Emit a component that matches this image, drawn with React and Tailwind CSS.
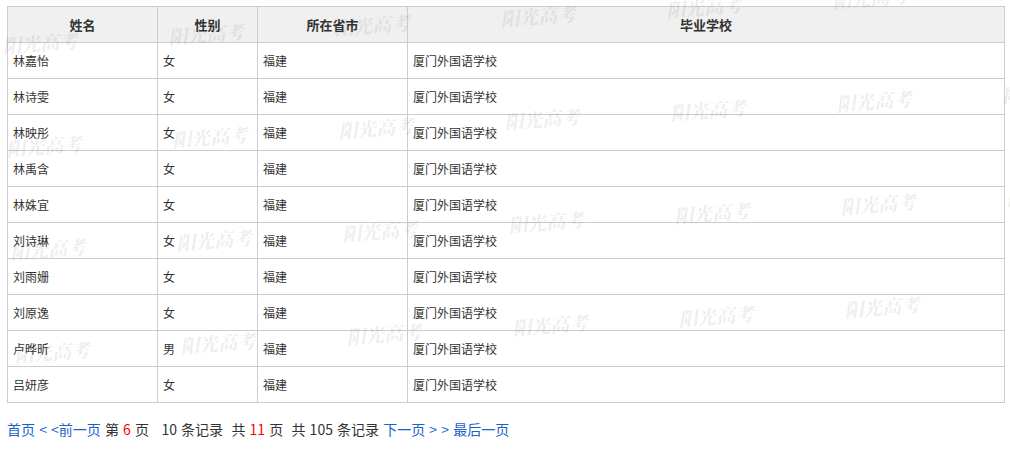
import React from 'react';

const rows = [
  ['林嘉怡', '女'],
  ['林诗雯', '女'],
  ['林映彤', '女'],
  ['林禹含', '女'],
  ['林姝宜', '女'],
  ['刘诗琳', '女'],
  ['刘雨姗', '女'],
  ['刘原逸', '女'],
  ['卢晔昕', '男'],
  ['吕妍彦', '女'],
];

// watermark grid: centers drift up-right, rows step down
const marks = [];
for (let j = 0; j < 4; j++) {
  for (let i = 0; i < 7; i++) {
    marks.push({ x: 42 + 166 * i + 4 * j, y: 42 - 9 * i + 103 * j });
  }
}

const cell = 'border border-[#cccccc] h-[36px] px-[5px] text-left font-normal';
const head = 'border border-[#cccccc] h-[36px] text-center font-bold text-[13px]';

export default function App() {
  return (
    <div className="relative w-[1010px] h-[449px] overflow-hidden bg-white pt-[6px] pl-[7px] font-['Noto_Sans_CJK_SC',sans-serif] text-[#333]">
      <table className="w-[998px] border-collapse table-fixed text-[12px]">
        <colgroup>
          <col className="w-[150px]" />
          <col className="w-[100px]" />
          <col className="w-[150px]" />
          <col />
        </colgroup>
        <thead>
          <tr className="bg-[#f0f0f0]">
            <th className={head}>姓名</th>
            <th className={head}>性别</th>
            <th className={head}>所在省市</th>
            <th className={head}>毕业学校</th>
          </tr>
        </thead>
        <tbody>
          {rows.map(([name, sex]) => (
            <tr key={name}>
              <td className={cell}>{name}</td>
              <td className={cell}>{sex}</td>
              <td className={cell}>福建</td>
              <td className={cell}>厦门外国语学校</td>
            </tr>
          ))}
        </tbody>
      </table>

      <div className="mt-[16px] text-[14px] leading-[20px] text-[#333] whitespace-pre [word-spacing:1px]">
        <a className="text-[#1a62c9]">首页</a>
        {' '}
        <a className="text-[#1a62c9]">{'< <前一页'}</a>
        {' 第 '}
        <span className="text-[#ff0000]">6</span>
        {' 页   10 条记录  共 '}
        <span className="text-[#ff0000]">11</span>
        {' 页  共 105 条记录 '}
        <a className="text-[#1a62c9]">{'下一页 > >'}</a>
        {' '}
        <a className="text-[#1a62c9]">最后一页</a>
      </div>

      {/* watermark overlay */}
      <div className="pointer-events-none absolute inset-0">
        {marks.map((m, k) => (
          <span
            key={k}
            className="absolute -translate-x-1/2 -translate-y-1/2 -rotate-[4deg] -skew-x-12 whitespace-nowrap text-[19px] leading-none font-black text-black/[0.08] font-['Noto_Serif_CJK_SC','Noto_Sans_CJK_SC',serif]"
            style={{ left: m.x, top: m.y }}
          >
            阳光高考
          </span>
        ))}
      </div>
    </div>
  );
}
